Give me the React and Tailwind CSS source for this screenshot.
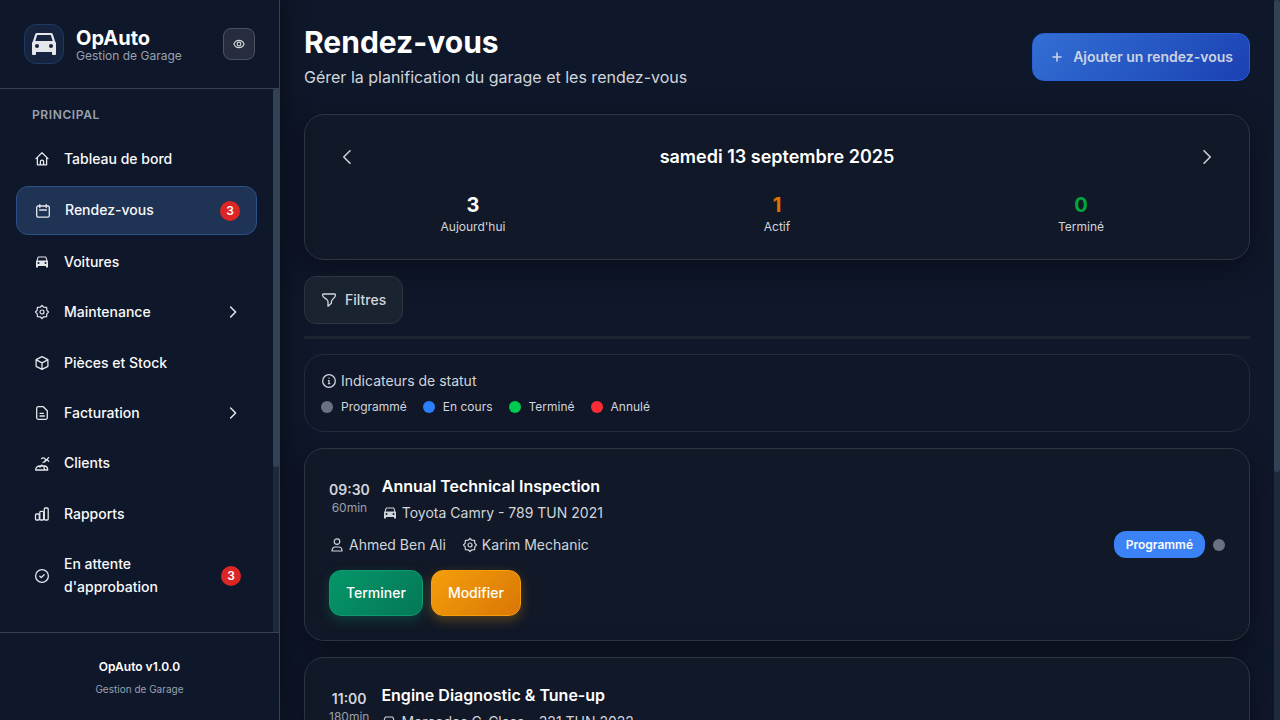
import React, { useCallback, useEffect, useRef, useState } from "react";

function ScrollArea({ as: Tag, className, children }) {
  const ref = useRef(null);
  const [thumb, setThumb] = useState({ top: 0, height: 100 });
  const update = useCallback(() => {
    const el = ref.current;
    if (!el) return;
    setThumb({
      top: (el.scrollTop / el.scrollHeight) * 100,
      height: (el.clientHeight / el.scrollHeight) * 100,
    });
  }, []);
  useEffect(() => {
    update();
    const observer = new ResizeObserver(update);
    observer.observe(ref.current);
    return () => observer.disconnect();
  }, [update]);
  return (
    <div className="flex min-h-0 min-w-0 flex-1">
      <Tag
        ref={ref}
        onScroll={update}
        className={"min-w-0 flex-1 overflow-y-auto [scrollbar-width:none] " + className}
      >
        {children}
      </Tag>
      <div className="relative w-1.5 shrink-0 bg-[#1e293b]" aria-hidden="true">
        <div
          className="absolute inset-x-0 rounded-[3px] bg-[#334155]"
          style={{ top: `${thumb.top}%`, height: `${thumb.height}%` }}
        />
      </div>
    </div>
  );
}

function Svg({ children, className = "size-4", strokeWidth = 1.3 }) {
  return (
    <svg
      viewBox="0 0 16 16"
      className={className + " shrink-0"}
      fill="none"
      stroke="currentColor"
      strokeWidth={strokeWidth}
      strokeLinecap="round"
      strokeLinejoin="round"
      aria-hidden="true"
    >
      {children}
    </svg>
  );
}

const HomeIcon = () => (
  <Svg>
    <path d="M2 7.6 8 1.8l6 5.8M3.4 6.5v7.3h9.2V6.5M6.4 13.6v-2.8a1.6 1.6 0 0 1 3.2 0v2.8" />
  </Svg>
);
const CalendarIcon = () => (
  <Svg>
    <rect x="1.7" y="3" width="12.6" height="11.2" rx="1.6" />
    <path d="M4.8 1.6v3M11.200 1.6v3M4.6 7h6.800" />
  </Svg>
);
const CarIcon = ({ className = "mx-px size-3.5" }) => (
  <svg viewBox="0 0 28 28" className={className + " shrink-0"} fill="currentColor" aria-hidden="true">
    <path
      fillRule="evenodd"
      d="M7 3h14a2 2 0 0 1 1.9 1.4L25 11l1 2v11a1 1 0 0 1-1 1h-2a1 1 0 0 1-1-1v-2H6v2a1 1 0 0 1-1 1H3a1 1 0 0 1-1-1V13l1-2 2.1-6.6A2 2 0 0 1 7 3Zm.2 2L5.3 11h17.4l-1.9-6H7.2ZM7 14a2 2 0 1 0 0 4 2 2 0 0 0 0-4Zm14 0a2 2 0 1 0 0 4 2 2 0 0 0 0-4Z"
    />
  </svg>
);
const GearIcon = () => (
  <Svg strokeWidth={1.2}>
    <path d="M8 1.5 9.8 3.2 12.6 3.4 12.8 6.2 14.5 8 12.8 9.8 12.6 12.6 9.8 12.8 8 14.5 6.2 12.8 3.4 12.6 3.2 9.8 1.5 8 3.2 6.2 3.4 3.4 6.2 3.2Z" />
    <circle cx="8" cy="8" r="2" />
  </Svg>
);
const BoxIcon = () => (
  <Svg>
    <path d="M8 1.6 13.9 4.7v6.6L8 14.4 2.1 11.3V4.7ZM2.3 4.9 8 7.8l5.7-2.9M8 7.8v6.4" />
  </Svg>
);
const FileIcon = () => (
  <Svg>
    <path d="M9.3 1.7H4.2c-.8 0-1.500.7-1.500 1.500v9.600c0 .8.700 1.500 1.500 1.500h7.600c.8 0 1.500-.7 1.500-1.500V5.700ZM6 8.300h3.400M6 11h4.400" />
  </Svg>
);
const ClientsIcon = () => (
  <Svg>
    <path d="M1.700 14h12c0-2.500-1.500-4-3.500-4H6c-2.500 0-4.300 1.500-4.300 4ZM6 11.200l1.500-2 2.300 1.200.8 3.400M7.600 2.600c1-1.200 3-1 3.600.4.700 1.500-.3 3.200-2.200 3.300M11.200 3.400l1.600.2 1.800-2M12.800 3.600l1.900 1.700M12.800 3.600 11 5.700" />
  </Svg>
);
const ChartIcon = () => (
  <Svg>
    <rect x="1.5" y="8" width="3.800" height="6" rx="1" />
    <rect x="5.800" y="5.3" width="3.800" height="8.700" rx="1" />
    <rect x="10.3" y="2" width="3.900" height="12" rx="1" />
  </Svg>
);
const CheckIcon = () => (
  <Svg>
    <circle cx="8" cy="8" r="6.4" />
    <path d="m5.800 8.200 1.500 1.400 2.800-2.900" />
  </Svg>
);
const EyeIcon = () => (
  <Svg className="size-3" strokeWidth={1.5}>
    <path d="M1.200 8C2.500 4.900 5 3.200 8 3.200s5.500 1.700 6.800 4.800c-1.300 3.100-3.800 4.800-6.800 4.800S2.500 11.100 1.200 8Z" />
    <circle cx="8" cy="8" r="2.5" />
  </Svg>
);
const UserIcon = () => (
  <Svg strokeWidth={1.2}>
    <circle cx="8" cy="4.600" r="2.800" />
    <path d="M3 14h10c0-2.400-1.300-4-3.200-4H6.200C4.300 10 3 11.600 3 14Z" />
  </Svg>
);
const FilterIcon = () => (
  <Svg>
    <path d="M2.400 2h11.200c.6 0 .9.500.9 1 0 2-1.200 3-2.700 4.200-1 .8-1.400 1.500-1.400 2.500v1.500L7 14.300V9.700c0-1-.5-1.700-1.500-2.500C3 5.600 1.500 5 1.500 3c0-.5.3-1 .9-1Z" />
  </Svg>
);
const InfoIcon = () => (
  <Svg>
    <circle cx="8" cy="8" r="6.300" />
    <path d="M7.400 7.600H8v3M7.400 10.700h1.400M8 5.200v.1" strokeWidth="1.200" />
  </Svg>
);
const PlusIcon = () => (
  <Svg strokeWidth={1.6}>
    <path d="M8 4v8M4 8h8" />
  </Svg>
);
const ChevronRight = ({ className = "size-4", strokeWidth = 1.5 }) => (
  <Svg className={className} strokeWidth={strokeWidth}>
    <path d="m5.600 3 5 5-5 5" />
  </Svg>
);
const ChevronLeft = ({ className, strokeWidth = 1.5 }) => (
  <Svg className={className} strokeWidth={strokeWidth}>
    <path d="m10.400 3-5 5 5 5" />
  </Svg>
);

const navItems = [
  { label: "Tableau de bord", icon: HomeIcon },
  { label: "Rendez-vous", icon: CalendarIcon, badge: 3, active: true },
  { label: "Voitures", icon: CarIcon },
  { label: "Maintenance", icon: GearIcon, expandable: true },
  { label: "Pièces et Stock", icon: BoxIcon },
  { label: "Facturation", icon: FileIcon, expandable: true },
  { label: "Clients", icon: ClientsIcon },
  { label: "Rapports", icon: ChartIcon },
  { label: "En attente d'approbation", icon: CheckIcon, badge: 3 },
];

function NavItem({ label, icon: Icon, badge, active, expandable }) {
  const base =
    "flex w-full items-center gap-3.5 rounded-xl py-3 pr-4 pl-4.5 text-left text-sm leading-[1.6] font-medium text-gray-50";
  const content = (
    <>
      <span className="flex text-gray-200">
        <Icon />
      </span>
      <span className="min-w-0 flex-1 pr-4">{label}</span>
      {badge && (
        <span className="flex size-5 shrink-0 items-center justify-center rounded-full bg-[#dc2626] text-xs font-semibold text-white">
          {badge}
        </span>
      )}
      {expandable && (
        <span className="flex text-gray-200">
          <ChevronRight />
        </span>
      )}
    </>
  );
  if (expandable) {
    return (
      <button type="button" aria-expanded="false" className={base}>
        {content}
      </button>
    );
  }
  return (
    <a
      href="#"
      aria-current={active ? "page" : undefined}
      className={active ? base + " border border-[#2b5288] bg-[#1f3354]" : base}
    >
      {content}
    </a>
  );
}

function Sidebar() {
  return (
    <aside className="relative z-10 flex w-[280px] shrink-0 flex-col border-r border-[#374151] bg-[#0f172a] shadow-[4px_0_24px_rgba(0,0,0,0.4)]">
      <header className="flex items-center gap-3 border-b border-[#374151] p-6">
        <div className="flex size-10 items-center justify-center rounded-xl border border-[#1e3a63] bg-[#16243f] text-gray-200">
          <CarIcon className="size-7" />
        </div>
        <div className="flex-1">
          <div className="text-xl leading-6 font-bold text-white">OpAuto</div>
          <div className="text-xs leading-3 text-gray-400">Gestion de Garage</div>
        </div>
        <button
          type="button"
          aria-label="Réduire le menu"
          className="flex size-8 items-center justify-center rounded-lg border border-[#4b5261] bg-[#272d3e] text-gray-300"
        >
          <EyeIcon />
        </button>
      </header>
      <ScrollArea as="nav" className="px-4 pt-[17px]">
        <h2 className="mb-3 px-4 text-xs leading-[18px] font-semibold tracking-wider text-gray-400">
          PRINCIPAL
        </h2>
        <ul className="flex flex-col gap-1 pb-65">
          {navItems.map((item) => (
            <li key={item.label}>
              <NavItem {...item} />
            </li>
          ))}
        </ul>
      </ScrollArea>
      <footer className="flex h-22 flex-col items-center gap-0.5 border-t border-[#374151] px-6 pt-6">
        <div className="text-xs leading-5 font-semibold text-white">OpAuto v1.0.0</div>
        <div className="text-[10px] leading-5 text-gray-400">Gestion de Garage</div>
      </footer>
    </aside>
  );
}

const stats = [
  { value: 3, label: "Aujourd'hui", color: "text-white" },
  { value: 1, label: "Actif", color: "text-[#e17100]" },
  { value: 0, label: "Terminé", color: "text-[#00a63e]" },
];

const statuses = [
  { label: "Programmé", color: "bg-[#6a7282]" },
  { label: "En cours", color: "bg-[#2b7fff]" },
  { label: "Terminé", color: "bg-[#00c950]" },
  { label: "Annulé", color: "bg-[#fb2c36]" },
];

const appointments = [
  {
    time: "09:30",
    duration: "60min",
    title: "Annual Technical Inspection",
    vehicle: "Toyota Camry - 789 TUN 2021",
    client: "Ahmed Ben Ali",
    mechanic: "Karim Mechanic",
  },
  {
    time: "11:00",
    duration: "180min",
    title: "Engine Diagnostic & Tune-up",
    vehicle: "Mercedes C-Class - 321 TUN 2022",
  },
];

const card =
  "rounded-[20px] border border-[#2d3543] bg-[#111827] p-6 shadow-[0_8px_32px_rgba(0,0,0,0.4)]";

function Appointment({ time, duration, title, vehicle, client, mechanic }) {
  return (
    <article className={card}>
      <div className="flex items-center gap-3">
        <div className="flex min-w-10 flex-col items-center">
          <span className="text-sm leading-5 font-semibold text-gray-300">{time}</span>
          <span className="text-xs leading-4 text-gray-400">{duration}</span>
        </div>
        <div>
          <h3 className="text-base leading-[26px] font-semibold text-white">{title}</h3>
          <p className="mt-1 flex items-center gap-1 text-sm leading-5 text-gray-300">
            <CarIcon />
            {vehicle}
          </p>
        </div>
      </div>
      <div className="mt-2 flex items-center justify-between">
        <div className="flex items-center gap-4 text-sm leading-[21px] text-gray-300">
          {client && (
            <span className="flex items-center gap-1">
              <UserIcon />
              {client}
            </span>
          )}
          {mechanic && (
            <span className="flex items-center gap-1">
              <GearIcon />
              {mechanic}
            </span>
          )}
        </div>
        <div className="flex items-center gap-2">
          <span className="rounded-xl bg-[#3b82f6] px-3 text-xs leading-[27px] font-semibold text-gray-50">
            Programmé
          </span>
          <span className="size-3 rounded-full bg-[#6a7282]" />
        </div>
      </div>
      <div className="mt-3 flex gap-2">
        <button
          type="button"
          className="rounded-xl border border-[#0e9a6c] bg-linear-135 from-[#059669] to-[#047857] px-4 text-sm leading-11 font-medium text-white shadow-[0_4px_12px_rgba(5,150,105,0.3)]"
        >
          Terminer
        </button>
        <button
          type="button"
          className="rounded-xl border border-[#f59e0b] bg-linear-135 from-[#f59e0b] to-[#d97706] px-4 text-sm leading-11 font-medium text-white shadow-[0_4px_12px_rgba(245,158,11,0.3)]"
        >
          Modifier
        </button>
      </div>
    </article>
  );
}

export default function App() {
  return (
    <div className="flex h-screen bg-[#0f172a] font-[Inter,sans-serif]">
      <Sidebar />
      <ScrollArea as="main" className="px-6 pt-6">
        <header className="mb-6 flex items-center justify-between">
          <div>
            <h1 className="text-3xl leading-9 font-bold text-white">Rendez-vous</h1>
            <p className="mt-1 text-base leading-[26px] text-gray-300">
              Gérer la planification du garage et les rendez-vous
            </p>
          </div>
          <button
            type="button"
            className="flex h-12 items-center gap-2 rounded-xl border border-[#2860d6] bg-linear-135 from-[#336fd4] to-[#1c40b2] px-4 text-sm font-semibold text-[#ccd2e4]"
          >
            <PlusIcon />
            Ajouter un rendez-vous
          </button>
        </header>

        <section className={card}>
          <div className="mb-4 flex items-center justify-between">
            <button type="button" aria-label="Jour précédent" className="p-2 text-gray-300">
              <ChevronLeft className="size-5" strokeWidth={1.2} />
            </button>
            <h2 className="text-lg font-semibold text-white">samedi 13 septembre 2025</h2>
            <button type="button" aria-label="Jour suivant" className="p-2 text-gray-300">
              <ChevronRight className="size-5" strokeWidth={1.2} />
            </button>
          </div>
          <div className="grid grid-cols-3 gap-4 text-center">
            {stats.map((s) => (
              <div key={s.label}>
                <div className={"text-xl font-bold " + s.color}>{s.value}</div>
                <div className="text-xs text-gray-300">{s.label}</div>
              </div>
            ))}
          </div>
        </section>

        <button
          type="button"
          className="relative mt-4 flex h-12 items-center gap-2 rounded-xl border border-[#2c3542] bg-[#1a2330] px-4 text-sm font-medium text-gray-300"
        >
          <FilterIcon />
          Filtres
        </button>
        <hr className="relative mt-3 border-t-3 border-[#1c2433]" />

        <section className="relative mt-[15px] rounded-[20px] border border-[#242c3b] bg-[#101728] p-4">
          <h2 className="mb-2 flex items-center gap-1 text-sm text-gray-300">
            <InfoIcon />
            Indicateurs de statut
          </h2>
          <ul className="flex flex-wrap gap-4 text-xs text-gray-300">
            {statuses.map((s) => (
              <li key={s.label} className="flex items-center gap-2">
                <span className={"size-3 rounded-full " + s.color} />
                {s.label}
              </li>
            ))}
          </ul>
        </section>

        <div className="mt-4 flex flex-col gap-4 pb-62">
          {appointments.map((a) => (
            <Appointment key={a.time} {...a} />
          ))}
        </div>
      </ScrollArea>
    </div>
  );
}
